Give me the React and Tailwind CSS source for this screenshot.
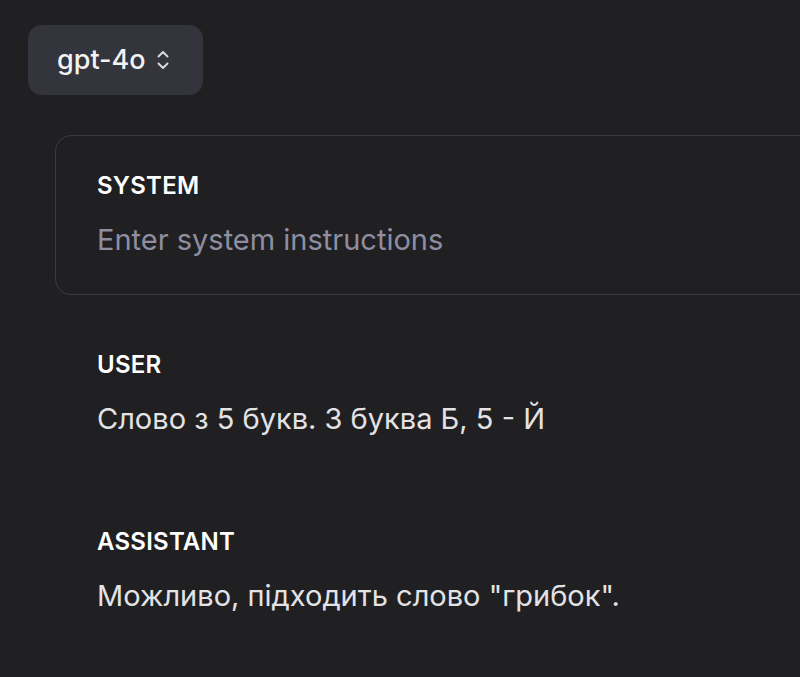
import React from "react";

function Chevrons() {
  return (
    <svg width="14" height="24" viewBox="0 0 14 24" fill="none" stroke="currentColor" strokeWidth="2" strokeLinecap="round" strokeLinejoin="round">
      <path d="M2.5 8.5L7 4l4.5 4.5" />
      <path d="M2.5 15.5L7 20l4.5-4.5" />
    </svg>
  );
}

function Message({ role, text, className = "" }) {
  return (
    <div className={`pl-[42px] ${className}`}>
      <div className="text-[24px] font-semibold leading-[32px] tracking-[0.01em] text-white">
        {role}
      </div>
      <div className="mt-[18px] text-[29px] leading-[40px] text-[#e3e3e6]">
        {text}
      </div>
    </div>
  );
}

export default function App() {
  return (
    <div
      className="min-h-[677px] w-[800px] overflow-hidden bg-[#202023] pl-[28px] pt-[25px]"
      style={{ fontFamily: "Inter, 'Noto Sans', sans-serif" }}
    >
      <button className="flex h-[70px] w-[175px] items-center gap-[10px] rounded-[14px] bg-[#33343c] pl-[29px] text-[27px] font-medium text-[#f2f2f4]">
        <span>gpt-4o</span>
        <span className="text-[#d6d6dc]">
          <Chevrons />
        </span>
      </button>

      <div className="ml-[27px] mt-[40px]">
        <div className="flex h-[160px] w-[800px] flex-col justify-center rounded-[16px] border border-[#3a3b41] px-[41px]">
          <div className="text-[24px] font-semibold leading-[32px] tracking-[0.01em] text-white">
            SYSTEM
          </div>
          <div className="mt-[18px] text-[29px] leading-[40px] text-[#8e8ea0]">
            Enter system instructions
          </div>
        </div>

        <Message
          role="USER"
          text="Слово з 5 букв. 3 буква Б, 5 - Й"
          className="mt-[54px]"
        />
        <Message
          role="ASSISTANT"
          text={'Можливо, підходить слово "грибок".'}
          className="mt-[87px]"
        />
      </div>
    </div>
  );
}
